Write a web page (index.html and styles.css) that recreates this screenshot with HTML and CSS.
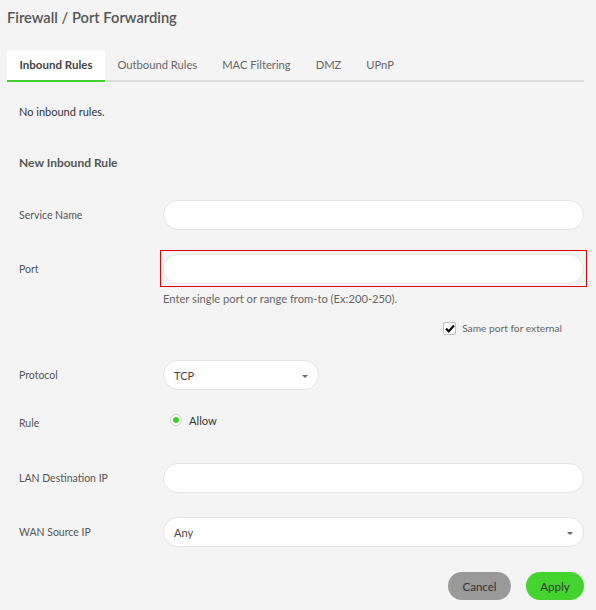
FILE: index.html
```html
<!DOCTYPE html>
<html>
<head>
<meta charset="utf-8">
<link rel="stylesheet" href="styles.css">
</head>
<body>
<div class="page">
  <h1 class="title">Firewall / Port Forwarding</h1>
  <div class="tabs">
    <div class="tab active">Inbound Rules</div>
    <div class="tab">Outbound Rules</div>
    <div class="tab">MAC Filtering</div>
    <div class="tab">DMZ</div>
    <div class="tab">UPnP</div>
  </div>
  <div class="content">
    <p class="empty">No inbound rules.</p>
    <h2 class="section">New Inbound Rule</h2>

    <div class="row r-service">
      <label class="lbl">Service Name</label>
      <div class="field"><div class="input"></div></div>
    </div>

    <div class="row r-port">
      <label class="lbl">Port</label>
      <div class="field"><div class="focus"><div class="input"></div></div></div>
    </div>
    <div class="row r-help">
      <span></span>
      <div class="help">Enter single port or range from-to (Ex:200-250).</div>
    </div>
    <div class="check-row">
      <span class="checkbox"><svg width="10" height="9" viewBox="0 0 10 9"><path d="M1 4.6 L3.8 7.3 L9 1.4" fill="none" stroke="#111" stroke-width="2.2"/></svg></span>
      <span class="check-label">Same port for external</span>
    </div>

    <div class="row r-protocol">
      <label class="lbl">Protocol</label>
      <div class="field"><div class="select small"><span>TCP</span><span class="arrow"></span></div></div>
    </div>

    <div class="row r-rule">
      <label class="lbl">Rule</label>
      <div class="radios"><span class="radio"><span class="dot"></span></span><span class="radio-label">Allow</span></div>
    </div>

    <div class="row r-lan">
      <label class="lbl">LAN Destination IP</label>
      <div class="field"><div class="input"></div></div>
    </div>

    <div class="row r-wan">
      <label class="lbl">WAN Source IP</label>
      <div class="field"><div class="select"><span>Any</span><span class="arrow"></span></div></div>
    </div>

    <div class="actions">
      <button class="btn cancel">Cancel</button>
      <button class="btn apply">Apply</button>
    </div>
  </div>
</div>
</body>
</html>
```

FILE: styles.css
```css
html, body {
  margin: 0;
  padding: 0;
  background: #f4f4f4;
  font-family: Lato, "Open Sans", sans-serif;
  color: #555;
}
.page {
  padding: 7px 12px 0 7px;
}
.title {
  margin: 0;
  font-size: 14.7px;
  line-height: 20px;
  font-weight: 600;
  color: #555;
}
.tabs {
  display: flex;
  margin-top: 23px;
  border-bottom: 2px solid #dcdcdc;
  height: 30px;
}
.tab {
  padding: 0 12.5px;
  line-height: 30px;
  height: 30px;
  font-size: 11.2px;
  color: #666;
  border-bottom: 2px solid transparent;
}
.tab.active {
  background: #fff;
  border-bottom-color: #46cf33;
  color: #444;
  font-weight: 700;
  font-size: 11.5px;
}
.content {
  padding-left: 12px;
}
.empty {
  margin: 22px 0 0;
  font-size: 11px;
  line-height: 16px;
  color: #333;
}
.section {
  margin: 35px 0 0;
  font-size: 12px;
  line-height: 16px;
  font-weight: 700;
  color: #555;
}
.row {
  display: grid;
  grid-template-columns: 144px 1fr;
  align-items: center;
}
.lbl {
  font-size: 10.5px;
  line-height: 16px;
  color: #555;
}
.input, .select {
  height: 28px;
  background: #fff;
  border: 1px solid #e4e4e4;
  border-radius: 15px;
  box-sizing: content-box;
}
.select {
  display: flex;
  align-items: center;
  justify-content: space-between;
  padding: 0 10px;
  font-size: 11px;
  color: #444;
}
.select.small {
  width: 134px;
}
.arrow {
  width: 0;
  height: 0;
  border-left: 3px solid transparent;
  border-right: 3px solid transparent;
  border-top: 3px solid #666;
  margin-top: 2px;
}
.r-service { margin-top: 29px; }
.r-port { margin-top: 20px; }
.focus {
  border: 1px solid #e00000;
  padding: 3px 2px 2px 2px;
  margin: 0 -3px;
}
.r-help { margin-top: 4px; }
.help {
  font-size: 11.2px;
  line-height: 16px;
  color: #666;
}
.check-row {
  display: flex;
  justify-content: flex-end;
  align-items: center;
  margin-top: 13px;
  padding-right: 22px;
  height: 16px;
}
.checkbox {
  width: 11px;
  height: 11px;
  border: 1px solid #bdbdbd;
  border-radius: 2px;
  background: #fff;
  display: flex;
  align-items: center;
  justify-content: center;
  margin-right: 6px;
}
.check-label {
  font-size: 10.2px;
  color: #666;
}
.r-protocol { margin-top: 24px; }
.r-rule {
  margin-top: 18px;
  height: 30px;
}
.radios {
  display: flex;
  align-items: center;
  align-self: start;
  padding-top: 4px;
  padding-left: 7px;
  height: 16px;
}
.radio {
  width: 10px;
  height: 10px;
  border: 1px solid #cfcfcf;
  border-radius: 50%;
  background: #fff;
  display: flex;
  align-items: center;
  justify-content: center;
  margin-right: 7px;
}
.dot {
  width: 6px;
  height: 6px;
  border-radius: 50%;
  background: #3fcf2c;
}
.radio-label {
  font-size: 11.2px;
  color: #333;
}
.r-lan { margin-top: 25px; }
.r-wan { margin-top: 24px; }
.actions {
  display: flex;
  justify-content: flex-end;
  gap: 15px;
  margin-top: 25px;
}
.btn {
  height: 28px;
  border: none;
  border-radius: 14px;
  font-family: Lato, "Open Sans", sans-serif;
  font-size: 11.5px;
  color: #333;
  padding: 0;
}
.cancel {
  width: 63px;
  background: #999;
}
.apply {
  width: 58px;
  background: #45d42f;
}
```
